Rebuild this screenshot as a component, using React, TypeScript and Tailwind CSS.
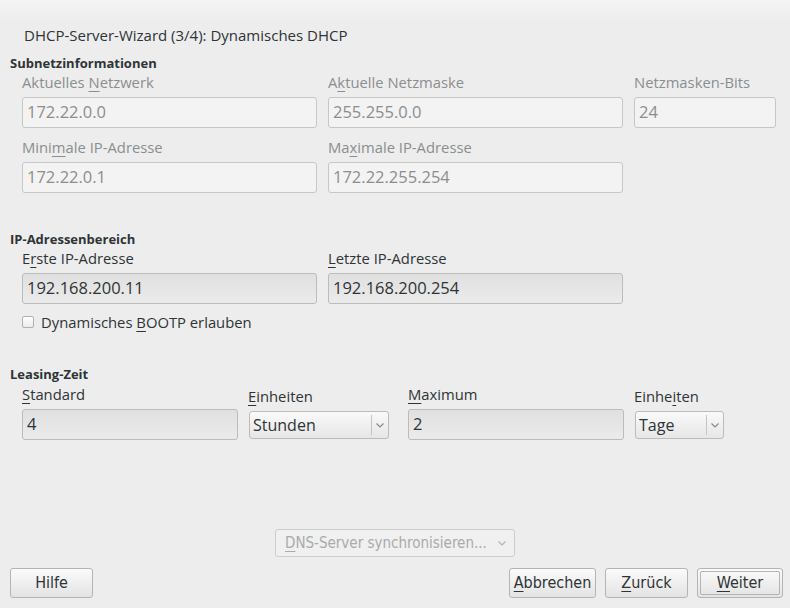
import React from 'react';

const FONT = "font-['Open_Sans','DejaVu_Sans',sans-serif]";
const COND = "font-['DejaVu_Sans_Condensed','DejaVu_Sans',sans-serif] font-stretch-condensed";

// mnemonic letter, underlined like GTK accelerators
const M: React.FC<{ children: React.ReactNode }> = ({ children }) => (
  <span className="underline decoration-1 underline-offset-[3px]">{children}</span>
);

interface FieldProps {
  label: React.ReactNode;
  value: string;
  disabled?: boolean;
  className?: string;
}

const Field: React.FC<FieldProps> = ({ label, value, disabled, className }) => (
  <div className={`flex flex-col ${className ?? ''}`}>
    <div className={`h-[18px] text-[14.8px] leading-[18px] ${disabled ? 'text-[#8b8e8f]' : 'text-[#2e3436]'}`}>
      {label}
    </div>
    <div
      className={`mt-[6px] h-[31px] rounded-[3px] border px-[4px] flex items-center text-[16.5px] ${
        disabled
          ? 'border-[#c7c7c7] bg-[#f3f3f3] text-[#8b8e8f]'
          : 'border-[#bcbcbc] bg-linear-to-b from-[#e0e0e0] to-[#ebebeb] text-[#2e3436]'
      }`}
    >
      {value}
    </div>
  </div>
);

const Chevron = () => (
  <svg width="8" height="5" viewBox="0 0 8 5" className="text-[#8a8a8a]">
    <path d="M0.5 0.5 L4 4 L7.5 0.5" fill="none" stroke="currentColor" strokeWidth="1.2" />
  </svg>
);

const Select: React.FC<{ label: React.ReactNode; value: string; width: string }> = ({ label, value, width }) => (
  <div className="flex flex-col">
    <div className="h-[18px] mt-[2px] text-[14.8px] leading-[18px] text-[#2e3436]">{label}</div>
    <div
      className={`${width} mt-[6px] ml-[1px] h-[28px] rounded-[3px] border border-[#bcbcbc] bg-linear-to-b from-[#fafafa] to-[#e6e6e6] flex items-center text-[16px] text-[#2e3436]`}
    >
      <span className="flex-1 pl-[3px]">{value}</span>
      <span className="h-[20px] w-px bg-[#c4c4c4]" />
      <span className="w-[16px] flex justify-center">
        <Chevron />
      </span>
    </div>
  </div>
);

const Button: React.FC<{ children: React.ReactNode; width: string; isDefault?: boolean }> = ({ children, width, isDefault }) => (
  <div
    className={`${width} h-[30px] rounded-[3px] border border-[#b4b4b4] bg-linear-to-b from-[#fbfbfb] to-[#e3e3e3] flex items-center justify-center text-[16px] text-[#2e3436] ${COND} ${
      isDefault ? 'p-[2px]' : ''
    }`}
  >
    {isDefault ? (
      <div className="w-full h-full rounded-[2px] border border-[#b4b4b4] flex items-center justify-center">{children}</div>
    ) : (
      children
    )}
  </div>
);

const SectionTitle: React.FC<{ children: React.ReactNode; className?: string }> = ({ children, className }) => (
  <div className={`text-[13px] font-bold leading-[16px] text-[#2e3436] ${className ?? ''}`}>{children}</div>
);

export default function App() {
  return (
    <div className={`w-[790px] h-[608px] bg-[#ededed] flex flex-col ${FONT} overflow-hidden`}>
      {/* faint header gradient */}
      <div className="h-[20px] bg-linear-to-b from-[#f4f4f4] to-[#ededed]" />
      <div className="pl-[24px] mt-[6px] text-[15px] leading-[18px] text-[#2e3436]">
        DHCP-Server-Wizard (3/4): Dynamisches DHCP
      </div>

      <div className="pl-[10px] pr-[14px] flex flex-col">
        <SectionTitle className="mt-[11px]">Subnetzinformationen</SectionTitle>
        <div className="pl-[12px] mt-[2px] grid grid-cols-[295px_295px_142px] gap-x-[11px]">
          <Field disabled label={<>Aktuelles <M>N</M>etzwerk</>} value="172.22.0.0" />
          <Field disabled label={<>A<M>k</M>tuelle Netzmaske</>} value="255.255.0.0" />
          <Field disabled label="Netzmasken-Bits" value="24" />
        </div>
        <div className="pl-[12px] mt-[10px] grid grid-cols-[295px_295px_142px] gap-x-[11px]">
          <Field disabled label={<>Mini<M>m</M>ale IP-Adresse</>} value="172.22.0.1" />
          <Field disabled label={<>Ma<M>x</M>imale IP-Adresse</>} value="172.22.255.254" />
        </div>

        <SectionTitle className="mt-[38px]">IP-Adressenbereich</SectionTitle>
        <div className="pl-[12px] mt-[2px] grid grid-cols-[295px_295px] gap-x-[11px]">
          <Field label={<>E<M>r</M>ste IP-Adresse</>} value="192.168.200.11" />
          <Field label={<><M>L</M>etzte IP-Adresse</>} value="192.168.200.254" />
        </div>
        <label className="pl-[12px] mt-[9px] flex items-center gap-[7px] text-[14.8px] leading-[18px] text-[#2e3436]">
          <span className="w-[12px] h-[12px] rounded-[2px] border border-[#b0b0b0] bg-linear-to-b from-[#ffffff] to-[#ececec]" />
          <span>Dynamisches <M>B</M>OOTP erlauben</span>
        </label>

        <SectionTitle className="mt-[35px]">Leasing-Zeit</SectionTitle>
        <div className="pl-[12px] mt-[3px] flex">
          <Field className="w-[216px]" label={<><M>S</M>tandard</>} value="4" />
          <div className="ml-[10px]">
            <Select label={<><M>E</M>inheiten</>} value="Stunden" width="w-[140px]" />
          </div>
          <Field className="w-[216px] ml-[19px]" label={<><M>M</M>aximum</>} value="2" />
          <div className="ml-[10px]">
            <Select label={<>Einhe<M>i</M>ten</>} value="Tage" width="w-[89px]" />
          </div>
        </div>
      </div>

      <div className="flex-1" />

      <div className="flex justify-center">
        <div
          className={`w-[240px] h-[28px] rounded-[3px] border border-[#cdcdcd] bg-[#f0f0f0] flex items-center text-[15px] text-[#a9abab] ${COND}`}
        >
          <span className="flex-1 pl-[9px]">
            <M>D</M>NS-Server synchronisieren...
          </span>
          <span className="w-[24px] flex justify-center opacity-60">
            <Chevron />
          </span>
        </div>
      </div>

      <div className="mt-[11px] mb-[10px] pl-[10px] pr-[7px] flex items-center">
        <Button width="w-[83px]">Hilfe</Button>
        <div className="flex-1" />
        <div className="flex gap-[9px]">
          <Button width="w-[87px]">
            <span>
              <M>A</M>bbrechen
            </span>
          </Button>
          <Button width="w-[83px]">
            <span>
              <M>Z</M>urück
            </span>
          </Button>
          <Button width="w-[86px]" isDefault>
            <span>
              <M>W</M>eiter
            </span>
          </Button>
        </div>
      </div>
    </div>
  );
}
